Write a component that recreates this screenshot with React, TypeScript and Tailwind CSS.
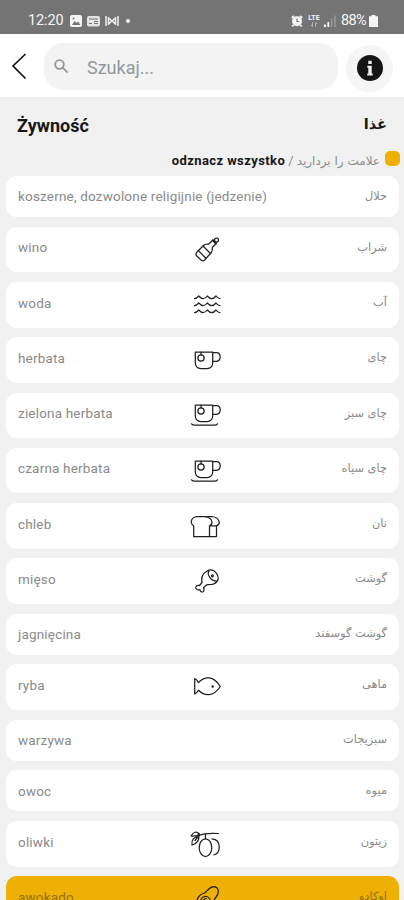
import type { ReactNode } from "react";
import { clsx } from "clsx";

type IconName = "bottle" | "waves" | "cup" | "cupSaucer" | "bread" | "meat" | "fish" | "olives" | "avocado";

interface Word {
  pl: string;
  fa: string;
  icon?: IconName;
  selected?: boolean;
}

const words: Word[] = [
  { pl: "koszerne, dozwolone religijnie (jedzenie)", fa: "حلال" },
  { pl: "wino", fa: "شراب", icon: "bottle" },
  { pl: "woda", fa: "آب", icon: "waves" },
  { pl: "herbata", fa: "چای", icon: "cup" },
  { pl: "zielona herbata", fa: "چای سبز", icon: "cupSaucer" },
  { pl: "czarna herbata", fa: "چای سیاه", icon: "cupSaucer" },
  { pl: "chleb", fa: "نان", icon: "bread" },
  { pl: "mięso", fa: "گوشت", icon: "meat" },
  { pl: "jagnięcina", fa: "گوشت گوسفند" },
  { pl: "ryba", fa: "ماهی", icon: "fish" },
  { pl: "warzywa", fa: "سبزیجات" },
  { pl: "owoc", fa: "میوه" },
  { pl: "oliwki", fa: "زیتون", icon: "olives" },
  { pl: "awokado", fa: "اوکادو", icon: "avocado", selected: true },
];

const cup = (
  <>
    <path d="M5.3 7H22.7V17.5Q22.7 23.5 17 23.5H11Q5.3 23.5 5.3 17.5Z" />
    <path d="M22.7 7.5H26.5Q30.2 7.5 30.2 11.8T26.5 16.3H22.7" />
    <path d="M11 7V10" />
    <circle cx="11" cy="13" r="3.1" />
  </>
);

const icons: Record<IconName, ReactNode> = {
  bottle: (
    <>
      <path d="M6.8 17.2L13.5 10.5Q15 9 18.5 9.2L23.2 4.8L26.5 8L22.3 12.5Q22.6 16 21 18L14.5 25Q13 26.5 11.3 25.2L6.8 21Q5 19 6.8 17.2Z" />
      <path d="M8.5 15.6L16 23.5M13 11L20.5 18.5M22.5 5.5L26 9" />
      <circle cx="26.5" cy="5" r="2" />
    </>
  ),
  waves: (
    <>
      <path d="M4.5 8.5Q6.5 8.5 8.8 6Q11 8.5 13 8.5Q15.5 8.5 17.3 6Q19.5 8.5 21.7 8.5Q24 8.5 26 6Q27.5 8.5 30 8.5" />
      <path d="M4.5 15.5Q6.5 15.5 8.8 13Q11 15.5 13 15.5Q15.5 15.5 17.3 13Q19.5 15.5 21.7 15.5Q24 15.5 26 13Q27.5 15.5 30 15.5" />
      <path d="M4.5 22.5Q6.5 22.5 8.8 20Q11 22.5 13 22.5Q15.5 22.5 17.3 20Q19.5 22.5 21.7 22.5Q24 22.5 26 20Q27.5 22.5 30 22.5" />
    </>
  ),
  cup,
  cupSaucer: (
    <>
      <g transform="translate(0 -2)">{cup}</g>
      <path d="M1.5 23.8Q2 25 4 25H25Q27 25 27.5 23.8" />
    </>
  ),
  bread: (
    <>
      <path d="M3.7 25.5V15Q1 13 1.2 10.5Q2 6 7 5.5H22Q28 6.2 29.3 11Q29.5 13.5 26.5 14.8V25.5Z" />
      <path d="M14 5.5Q21 6 22 11Q22.3 13.5 19.5 14.8V25.5M19.5 14.8H26.5" />
    </>
  ),
  meat: (
    <g transform="translate(0 -2)">
      <path d="M12 18.5C11 14 13 9.5 17 7Q20 5 23.5 6.5Q28.5 10 28.2 15Q27 19.5 21.5 20.5L17 20.7L13.5 23.5Q15 27 12.5 28Q10.5 28.3 9.8 25.7Q6 26.3 5.7 23.8Q6 21 9.5 21.5Z" />
      <path d="M19 7C16.5 10 21 17.5 27 17" />
      <circle cx="22.4" cy="11.8" r="1" />
    </g>
  ),
  fish: (
    <>
      <path d="M4.7 6.5Q7 7.5 8.5 10.7C14.5 4 23.5 3.5 30.3 14.5C23.5 25 14.5 24.5 8.5 18.3Q7 21 4.7 22Z" />
      <circle cx="22.7" cy="14.5" r="0.6" className="fill-current" />
    </>
  ),
  olives: (
    <>
      <path d="M1 7Q5 .5 9.5 5Q7 7.5 1 7ZM2 16Q1 8 9 7.5Q9 14 2 16ZM5 11.5L9 6.5Q15 3.7 28.5 4.5" />
      <ellipse cx="15.5" cy="18.7" rx="6.3" ry="8.8" />
      <path d="M15.5 9.8V5.5M22 9.8Q29.3 10.5 29.3 18Q29 25 24 25.8" />
    </>
  ),
  avocado: (
    <g transform="translate(0 -2.5)">
      <path d="M8.5 23C5 18 9 13 14.5 11.5C17.5 10 19 5 24 5.2C29 6 29.5 11.5 26 15.5C23 18.5 24 26 17 28Q11 29 8.5 23Z" />
      <circle cx="15.5" cy="19.5" r="4.6" />
      <path d="M13.5 19Q14 17 16 17.2" />
    </g>
  ),
};

function WordIcon({ name }: { name: IconName }) {
  return (
    <svg viewBox="0 0 30 30" className="h-[30px] w-[30px] overflow-visible fill-none stroke-[#202020] stroke-[1.25]" strokeLinecap="round" strokeLinejoin="round">
      {icons[name]}
    </svg>
  );
}

function StatusBar() {
  return (
    <div className="flex h-[34px] shrink-0 items-center justify-between bg-[#747474] pt-[7px] pr-[25px] pl-7 text-[14.5px] text-[#f4f4f4]">
      <div className="flex items-center">
        <span className="w-9 tracking-[-0.1px]">12:20</span>
        <svg viewBox="0 0 12 12" className="ml-[6px] h-3 w-3">
          <rect width="12" height="12" rx="2" fill="#f4f4f4" />
          <path d="M2 10L4.5 6L6.5 8L8 6.5L10.5 10Z" fill="#747474" />
          <circle cx="3.5" cy="3.5" r="1" fill="#747474" />
        </svg>
        <svg viewBox="0 0 13 12" className="ml-[5px] h-3 w-[13px]">
          <rect y="1" width="13" height="10.5" rx="2" fill="#e4e4e4" />
          <path d="M2 4H11M2 8.5H5M7 6.5H11M7 8.5H11" stroke="#747474" />
        </svg>
        <svg viewBox="0 0 14 12" className="ml-[5px] h-3 w-[14px] fill-none stroke-[#eeeeee] stroke-[1.5]">
          <path d="M1 1V11M3.5 2V10M10.5 2V10M13 1V11M3.5 3L7 6L10.5 3M3.5 9L7 6L10.5 9" />
        </svg>
        <span className="ml-[7px] h-1 w-1 rounded-full bg-[#f4f4f4]" />
      </div>
      <div className="flex items-center">
        <svg viewBox="0 0 12 12" className="h-3 w-3">
          <circle cx="6" cy="6.3" r="5" fill="#f4f4f4" />
          <path d="M.8 3L3 .8M9 .8L11.2 3M2.5 10L1.3 11.5M9.5 10L10.7 11.5" stroke="#f4f4f4" strokeWidth="1.8" />
          <path d="M6 3.5V6.5H8.3" fill="none" stroke="#747474" strokeWidth="1.2" />
        </svg>
        <div className="ml-1 flex w-[14px] flex-col items-center text-[7px] leading-[7px] font-bold">
          LTE
          <svg viewBox="0 0 8 5" className="h-[5px] w-2 fill-none stroke-[#b4b4b4]">
            <path d="M2.5 0V4.5L1 3M5.5 5V.5L7 2" />
          </svg>
        </div>
        <svg viewBox="0 0 12 12" className="ml-[3px] h-3 w-3">
          <path d="M0 9.5H2V12H0ZM3.4 7H5.2V12H3.4Z" fill="#f4f4f4" />
          <path d="M6.7 3.5H8.5V12H6.7ZM10 0.5H11.8V12H10Z" fill="#949494" />
        </svg>
        <span className="ml-[5px] w-[27px] tracking-[-0.7px]">88%</span>
        <svg viewBox="0 0 9 12" className="ml-[1px] mr-px h-3 w-[9px] fill-[#f4f4f4]">
          <path d="M2.5 0H6.5V1.2H9V12H0V1.2H2.5Z" />
        </svg>
      </div>
    </div>
  );
}

function SearchHeader() {
  return (
    <header className="flex h-[63px] shrink-0 items-center bg-white pt-px pr-[11px] pl-[11px]">
      <svg viewBox="0 0 16 28" className="h-7 w-4 fill-none stroke-[#151515] stroke-[1.7]">
        <path d="M14.5 2L2 14L14.5 26.5" />
      </svg>
      <div className="ml-[17px] flex h-[47px] w-[294px] items-center rounded-[19px] bg-[#f3f3f3] pl-[10px]">
        <svg viewBox="0 0 15 15" className="h-[15px] w-[15px] fill-none stroke-[#929699] stroke-[1.8]">
          <circle cx="5.5" cy="5.5" r="4.3" />
          <path d="M8.7 8.7L13.7 13.7" />
        </svg>
        <span className="mt-[2px] ml-[18px] text-[18px] text-[#92989c]">Szukaj...</span>
      </div>
      <div className="mt-1 ml-[8px] flex h-[47px] w-[47px] items-center justify-center rounded-full bg-[#f5f5f5]">
        <svg viewBox="0 0 26 26" className="h-[26px] w-[26px]">
          <circle cx="13" cy="13" r="13" fill="#151515" />
          <path d="M11.3 5.8H14.7V9H11.3ZM10.3 10.8H14.7V18.5H15.7V20.5H10.3V18.5H11.3V12.8H10.3Z" fill="#f0f0f0" />
        </svg>
      </div>
    </header>
  );
}

function WordRow({ word }: { word: Word }) {
  return (
    <div
      className={clsx(
        "grid shrink-0 grid-cols-[1fr_auto_1fr] items-center rounded-[11px] px-3",
        word.icon ? "h-[45.5px]" : "h-[41px]",
        word.selected ? "bg-[#efb005] text-[#93700f]" : "bg-white text-[#8a8a8a]"
      )}
    >
      <span className={clsx("text-[13.5px] tracking-[0.18px] whitespace-nowrap", word.icon && "-mt-[4px]")}>{word.pl}</span>
      <div className="translate-x-[2px]">{word.icon && <WordIcon name={word.icon} />}</div>
      <span dir="rtl" className={clsx("font-['DejaVu_Sans',sans-serif] text-[11.4px] whitespace-nowrap", word.icon && "-mt-[4px]")}>
        {word.fa}
      </span>
    </div>
  );
}

export default function App() {
  return (
    <div className="flex h-[900px] w-[404px] flex-col overflow-hidden bg-[#f1f1f1] font-[Roboto,'DejaVu_Sans',sans-serif]">
      <StatusBar />
      <SearchHeader />
      <main className="flex flex-col">
        <div className="flex h-[54px] items-center justify-between pt-[2px] pr-[17px] pl-[17px] text-[#171717]">
          <h1 className="text-[18px] font-bold">Żywność</h1>
          <h2 dir="rtl" className="font-['DejaVu_Sans',sans-serif] text-[14.5px] font-bold">
            غذا
          </h2>
        </div>
        <div className="flex h-[25px] items-start justify-end pr-[4px] text-[13px] leading-5 text-[#8c8c8c]">
          <span className="font-bold tracking-[0.42px] text-[#171717]">odznacz wszystko</span>
          <span className="mr-[3px] ml-[3px]">/</span>
          <span dir="rtl" className="font-['DejaVu_Sans',sans-serif] text-[12px]">
            علامت را بردارید
          </span>
          <span className="ml-[5px] h-[15px] w-[15px] rounded-[5px] bg-[#efb005]" />
        </div>
        <div className="flex flex-col gap-[9.75px] pr-[5px] pl-[6px]">
          {words.map((word) => (
            <WordRow key={word.pl} word={word} />
          ))}
        </div>
      </main>
    </div>
  );
}
